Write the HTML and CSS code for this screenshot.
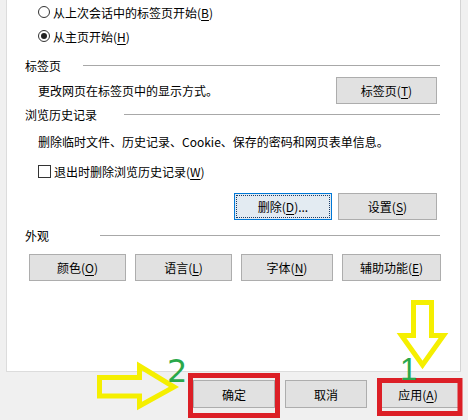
FILE: index.html
```html
<!DOCTYPE html>
<html>
<head>
<meta charset="utf-8">
<link rel="stylesheet" href="styles.css">
</head>
<body>
<div class="window">
  <div class="panel">
    <div class="row radio-row"><span class="radio"></span><span>从上次会话中的标签页开始(<u>B</u>)</span></div>
    <div class="row radio-row"><span class="radio checked"></span><span>从主页开始(<u>H</u>)</span></div>

    <div class="group g-tabs"><span>标签页</span><span class="line"></span></div>
    <div class="row desc-btn">
      <span class="desc">更改网页在标签页中的显示方式。</span>
      <button class="btn w100">标签页(<u>T</u>)</button>
    </div>

    <div class="group g-history"><span>浏览历史记录</span><span class="line"></span></div>
    <div class="row desc">删除临时文件、历史记录、Cookie、保存的密码和网页表单信息。</div>
    <div class="row check-row"><span class="check"></span><span>退出时删除浏览历史记录(<u>W</u>)</span></div>
    <div class="row btn-right">
      <button class="btn w98 focused"><span class="focus">删除(<u>D</u>)...</span></button>
      <button class="btn w99">设置(<u>S</u>)</button>
    </div>

    <div class="group g-look"><span>外观</span><span class="line"></span></div>
    <div class="look-btns">
      <button class="btn">颜色(<u>O</u>)</button>
      <button class="btn">语言(<u>L</u>)</button>
      <button class="btn">字体(<u>N</u>)</button>
      <button class="btn">辅助功能(<u>E</u>)</button>
    </div>
  </div>
  <div class="footer">
    <button class="btn fbtn">确定</button>
    <button class="btn fbtn">取消</button>
    <button class="btn fbtn">应用(<u>A</u>)</button>
  </div>
</div>
<svg class="overlay" viewBox="0 0 468 420" width="468" height="420">
  <polygon class="arrow" points="99.5,377.5 139.5,377.5 139.5,366 174,387 139.5,406 139.5,396 99.5,396"/>
  <polygon class="arrow" points="413.5,302.5 431.5,302.5 431.5,335.5 443.5,335.5 422.5,365 401.5,335.5 413.5,335.5"/>
  <rect class="redbox" x="190.5" y="375.5" width="87" height="40"/>
  <rect class="redbox" x="379.5" y="380.5" width="80.5" height="33"/>
  <text class="num" x="167" y="382">2</text>
  <text class="num thin" x="400" y="380">1</text>
</svg>
</body>
</html>
```

FILE: styles.css
```css
html, body {
  margin: 0;
  padding: 0;
}
body {
  width: 468px;
  height: 420px;
  overflow: hidden;
  background: #f0f0f0;
  font-family: "Noto Sans CJK SC", "Noto Sans", sans-serif;
  font-size: 12px;
  color: #000;
  position: relative;
}
u {
  text-decoration: underline;
  text-underline-offset: 2px;
}
.window {
  display: flex;
  flex-direction: column;
}
.panel {
  margin-left: 6px;
  width: 455px;
  background: #fff;
  border-left: 1px solid #dcdcdc;
  border-right: 1px solid #d4d4d4;
  border-bottom: 1px solid #dcdcdc;
  padding: 0 20px 0 18px;
  box-sizing: border-box;
  height: 372px;
}
.row {
  display: flex;
  align-items: center;
}
.radio-row {
  height: 24px;
  padding-left: 13px;
  gap: 3px;
}
.radio {
  width: 12px;
  height: 12px;
  border: 1px solid #333;
  border-radius: 50%;
  box-sizing: border-box;
  display: flex;
  align-items: center;
  justify-content: center;
}
.radio.checked::after {
  content: "";
  width: 6px;
  height: 6px;
  border-radius: 50%;
  background: #222;
}
.group {
  display: flex;
  align-items: center;
  height: 20px;
}
.group .line {
  flex: 1;
  height: 1px;
  background: #a8a8a8;
}
.g-tabs {
  margin-top: 7px;
}
.g-tabs .line {
  margin-left: 22px;
}
.g-history {
  margin-top: 0;
}
.g-history .line {
  margin-left: 27px;
}
.g-look {
  margin-top: 5px;
}
.g-look .line {
  margin-left: 51px;
}
.desc-btn {
  margin-top: 2px;
  height: 27px;
  justify-content: space-between;
  padding-left: 13px;
}
.desc {
  padding-left: 13px;
}
.row.desc {
  height: 20px;
  margin-top: 7px;
}
.desc-btn .desc {
  padding-left: 0;
}
.check-row {
  height: 20px;
  margin-top: 10px;
  padding-left: 13px;
  gap: 3px;
}
.check {
  width: 13px;
  height: 13px;
  border: 1px solid #333;
  box-sizing: border-box;
}
.btn {
  font-family: inherit;
  font-size: 12px;
  color: #000;
  background: #e1e1e1;
  border: 1px solid #adadad;
  height: 27px;
  padding: 0;
  margin: 0;
  box-sizing: border-box;
  display: flex;
  align-items: center;
  justify-content: center;
}
.w100 {
  width: 101px;
  margin-right: 3px;
}
.btn-right {
  margin-top: 12px;
  height: 27px;
  justify-content: flex-end;
  gap: 6px;
  padding-right: 3px;
}
.w98 {
  width: 98px;
}
.w99 {
  width: 99px;
}
.focused {
  border: 1px solid #0078d7;
  padding: 1px;
  background: #e3ebf2;
}
.focus {
  flex: 1;
  align-self: stretch;
  display: flex;
  align-items: center;
  justify-content: center;
  outline: 1px dotted #1a3b66;
  outline-offset: -1px;
}
.look-btns {
  display: grid;
  grid-template-columns: 97px 97px 92px 99px;
  column-gap: 9px;
  margin-top: 9px;
  margin-left: 4px;
}
.footer {
  display: flex;
  justify-content: flex-end;
  gap: 10px;
  padding: 8px 9px 0 0;
}
.fbtn {
  width: 82px;
  height: 28px;
}
.overlay {
  position: absolute;
  left: 0;
  top: 0;
  pointer-events: none;
}
.arrow {
  fill: none;
  stroke: #f5ef00;
  stroke-width: 5;
  stroke-linejoin: miter;
}
.redbox {
  fill: none;
  stroke: #dc1f26;
  stroke-width: 5;
}
.num {
  font-family: "DejaVu Sans", sans-serif;
  font-size: 32px;
  fill: #2aa84a;
}
.num.thin {
  font-family: "Liberation Sans", sans-serif;
  font-size: 31px;
  fill: #2aa84a;
}
```
